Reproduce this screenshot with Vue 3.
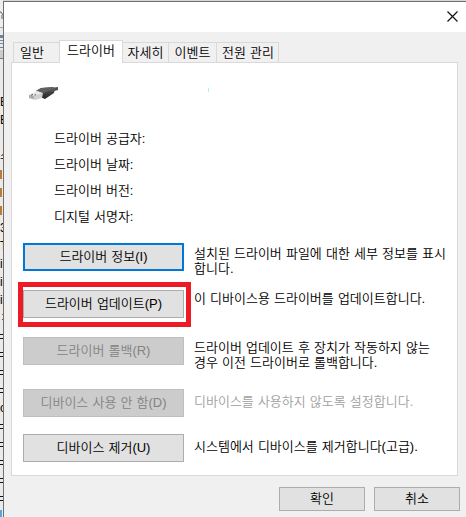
<template>
  <div class="screen">
    <div class="behind">
      <svg width="3" height="96" viewBox="0 0 3 96">
        <rect width="3" height="27" fill="#efeeec" />
        <path d="M0 12h1l2 3M2 15v4" stroke="#655d76" fill="none" />
        <rect y="27" width="3" height="1" fill="#a5a5a5" />
        <rect y="35" width="3" height="13" fill="#718096" />
        <rect y="38" width="3" height="9" fill="#e4eaf2" />
        <path d="M0 40.5h3M0 43.5h3" stroke="#7d8796" />
        <rect y="50" width="3" height="8" fill="#cccccc" />
        <rect y="58" width="3" height="1" fill="#777777" />
      </svg>
      <div v-for="(row, i) in rows" :key="i" class="row" :class="row.kind">{{ row.text }}</div>
    </div>

    <div class="dialog">
      <div class="titlebar">
        <svg class="close" width="11" height="11" viewBox="0 0 11 11">
          <path d="M.5 .5l10 10M10.5 .5l-10 10" stroke="#111" stroke-width="1.15" />
        </svg>
      </div>

      <div class="tabs">
        <div v-for="tab in tabs" :key="tab.label" class="tab" :class="[tab.size, { active: tab.active }]">
          <span>{{ tab.label }}</span>
        </div>
      </div>

      <div class="panel">
        <div class="device">
          <svg class="usb" width="31" height="15" viewBox="0 0 31 15">
            <defs>
              <linearGradient id="plug" x1="0" y1="0" x2="0" y2="1">
                <stop offset="0" stop-color="#737373" />
                <stop offset=".45" stop-color="#424242" />
                <stop offset="1" stop-color="#252525" />
              </linearGradient>
            </defs>
            <path d="M22 2l8-1v3l-7 2z" fill="#515151" />
            <path d="M8 5l5-3 12-1 2 2-1 4-9 6-5-2z" fill="url(#plug)" />
            <path d="M8 5l5-3 12-1 1 1-10 5z" fill="#606060" />
            <path d="M1 9l8-4 6 2-1 5-7 2-6-2z" fill="#d0d0d0" />
            <path d="M1 9l8-4 5 2-8 3z" fill="#e9e9e9" />
            <path d="M1 9l5 1v3l-5-1z" fill="#ababab" />
            <path d="M3 9.2l2-.8M6.5 9.2l1.6-.6" stroke="#555" />
          </svg>
          <span class="speck"></span>
        </div>

        <div class="fields">
          <div v-for="field in fields" :key="field">{{ field }}</div>
        </div>

        <div class="actions">
          <div v-for="action in actions" :key="action.label" class="action" :class="action.row">
            <div class="button-wrap">
              <button :class="{ focused: action.focused }" :disabled="action.disabled">{{ action.label }}</button>
              <div v-if="action.marked" class="marker"></div>
            </div>
            <div class="desc" :class="{ muted: action.muted }">
              <div v-for="line in action.lines" :key="line">{{ line }}</div>
            </div>
          </div>
        </div>
      </div>

      <div class="footer">
        <button>확인</button>
        <button>취소</button>
      </div>
    </div>
  </div>
</template>

<script setup>
const tabs = [
  { label: '일반', size: 'general' },
  { label: '드라이버', size: 'driver', active: true },
  { label: '자세히', size: 'details' },
  { label: '이벤트', size: 'events' },
  { label: '전원 관리', size: 'power' },
]

const fields = ['드라이버 공급자:', '드라이버 날짜:', '드라이버 버전:', '디지털 서명자:']

const actions = [
  { label: '드라이버 정보(I)', row: 'info', focused: true, lines: ['설치된 드라이버 파일에 대한 세부 정보를 표시', '합니다.'] },
  { label: '드라이버 업데이트(P)', row: 'update', marked: true, lines: ['이 디바이스용 드라이버를 업데이트합니다.'] },
  { label: '드라이버 롤백(R)', row: 'rollback', disabled: true, lines: ['드라이버 업데이트 후 장치가 작동하지 않는', '경우 이전 드라이버로 롤백합니다.'] },
  { label: '디바이스 사용 안 함(D)', row: 'disable', disabled: true, muted: true, lines: ['디바이스를 사용하지 않도록 설정합니다.'] },
  { label: '디바이스 제거(U)', row: 'remove', lines: ['시스템에서 디바이스를 제거합니다(고급).'] },
]

const rows = [
  { text: 'E' }, { text: 'E' }, { text: '' }, { text: '스' },
  { kind: 'bar' }, { kind: 'bar' }, { kind: 'bar' },
  { text: '3' }, { text: 'T' }, { text: 'i' }, { text: 'i' }, { text: 'i' }, { text: 'ㅈ' },
  { kind: 'lines' }, { kind: 'lines' }, { kind: 'lines' }, { kind: 'lines' },
  { text: 'o' },
  { kind: 'lines' }, { kind: 'lines' }, { kind: 'lines' }, { kind: 'lines' }, { kind: 'lines' },
  { kind: 'edge' },
]
</script>

<style>
body { margin: 0; overflow: hidden; }
</style>

<style scoped>
.screen {
  width: 466px; height: 517px; display: flex; overflow: hidden; color: #000;
  font: 350 13px/15px "Liberation Sans", "Noto Sans CJK KR", sans-serif;
  word-spacing: .5px;
}
.behind { width: 3px; flex-shrink: 0; background: #ebeae8; overflow: hidden; }
.behind svg { display: block; }
.row { height: 18px; line-height: 12px; font-size: 12px; overflow: hidden; }
.row.bar::before { content: ""; display: block; width: 2px; height: 9px; margin-top: 2px; background: #bd7a35; }
.row.lines::before { content: ""; display: block; height: 3px; margin-top: 4px; border-top: 1px solid #111; border-bottom: 1px solid #111; }
.row.edge::before { content: ""; display: block; width: 2px; height: 8px; background: #55a8df; }
.row.bar, .row.lines { display: flow-root; }
.dialog {
  flex: 1; box-sizing: border-box; height: 517px; background: #f0f0f0;
  border-left: 1px solid #707070; border-top: 1px solid #707070;
  box-shadow: 0 -1px #d7d7d7; margin-top: 1px;
}
.titlebar { height: 30px; background: #fff; display: flex; justify-content: flex-end; }
.close { margin: 9px 8px 0 0; }
.tabs { height: 30px; display: flex; align-items: flex-end; padding-left: 9px; }
.tab {
  height: 20px; box-sizing: border-box; border: 1px solid #d9d9d9; border-width: 1px 1px 0 0;
  text-align: center; line-height: 19px; white-space: nowrap;
}
.tab.general { width: 46px; border-left-width: 1px; border-right-width: 0; text-align: left; padding-left: 6px; }
.tab.driver { width: 64px; }
.tab.details { width: 46px; }
.tab.events { width: 48px; }
.tab.power { width: 62px; padding-left: 1px; }
.tab.active {
  height: 23px; margin-bottom: -1px; background: #fff; border-left-width: 1px;
  line-height: 19px; position: relative; z-index: 1;
}
.panel {
  margin-left: 7px; width: 447px; height: 414px; box-sizing: border-box;
  border: 1px solid #d9d9d9; background: #fff;
}
.device { height: 63px; display: flex; padding-left: 16px; }
.usb { margin-top: 23px; }
.speck { width: 1px; height: 4px; background: #a4f5f5; margin: 25px 0 0 149px; }
.fields { height: 117px; padding-left: 42px; line-height: 26px; }
.actions { padding-left: 11px; }
.action { display: flex; height: 47px; }
.action.rollback { height: 52px; }
.action.disable { height: 45px; }
.button-wrap { position: relative; width: 161px; height: 28px; }
button {
  display: block; width: 161px; height: 28px; box-sizing: border-box; padding: 0 0 2px;
  font: inherit; line-height: 15px; word-spacing: inherit; color: #000;
  background: #e1e1e1; border: 1px solid #adadad; border-radius: 0; white-space: nowrap;
}
button.focused { border: 2px solid #0078d7; }
button:disabled { color: #838383; background: #ccc; border-color: #bfbfbf; }
.marker { position: absolute; left: -5px; top: -8px; width: 173px; height: 45px; box-sizing: border-box; border: 5px solid #ed1c24; }
.desc { padding: 3px 0 0 10px; white-space: nowrap; }
.update .desc { padding-top: 1px; }
.disable .desc, .remove .desc { padding-top: 5px; }
.desc.muted { color: #a0a0a0; }
.footer { display: flex; justify-content: flex-end; gap: 9px; padding: 11px 6px 0 0; }
.footer button { width: 86px; height: 24px; }
</style>
